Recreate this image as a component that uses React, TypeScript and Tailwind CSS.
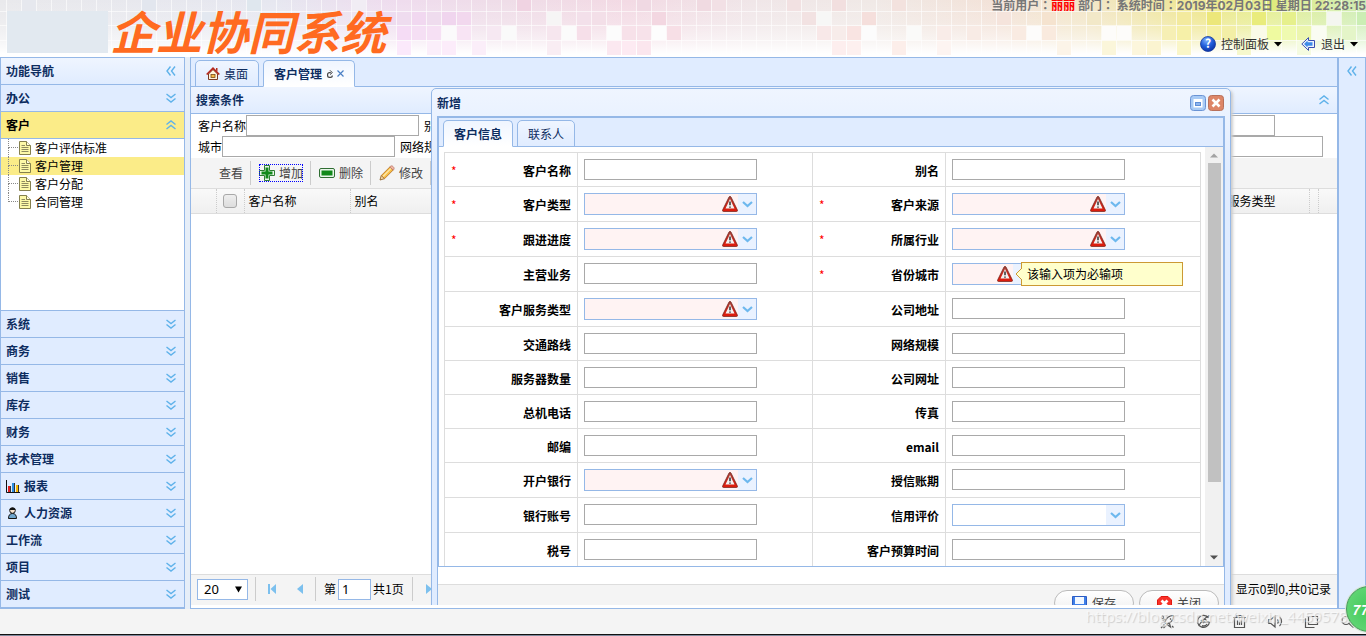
import React from "react";

/* ---------- small drawings ---------- */

function DoubleChevron({ dir }: { dir: "down" | "up" | "left" }) {
  const paths = {
    down: "M0.500 1l4.500 3.500 4.500-3.500M0.500 5.500l4.500 3.500 4.500-3.500",
    up: "M0.500 4.500L5 1l4.500 3.500M0.500 9l4.500-3.500L9.500 9",
    left: "M4.500 0.500L1 5l3.500 4.500M9 0.500L5.500 5 9 9.500",
  };
  return (
    <svg width="10" height="10" viewBox="0 0 10 10" fill="none" stroke="#5fb2ea" strokeWidth="1.400" aria-hidden="true">
      <path d={paths[dir]} />
    </svg>
  );
}

function DocIcon() {
  return (
    <svg width="14" height="14" viewBox="0 0 14 14" aria-hidden="true">
      <path d="M1.500 0.500H8.500L12.500 4.500V13.500H1.500Z" fill="#fdf9a8" stroke="#85804e" />
      <path d="M8.500 0.500V4.500H12.500" fill="#fffde0" stroke="#85804e" />
      <path d="M3.500 4.500H7M3.500 6.500H10.500M3.500 8.500H10.500M3.500 10.500H10.500" stroke="#8f8b5f" />
    </svg>
  );
}

function HomeIcon() {
  return (
    <svg width="14" height="14" viewBox="0 0 14 14" aria-hidden="true">
      <path d="M2.500 7V12.500H11.500V7L7 2.500Z" fill="#fff4dc" stroke="#7a3a22" />
      <path d="M10 1H11.500V4.500L10 3.500Z" fill="#b03020" />
      <path d="M0.700 7.500L7 1.300L13.300 7.500" fill="none" stroke="#b5281c" strokeWidth="1.700" />
      <rect x="5" y="7.500" width="4" height="3" fill="#f5b942" stroke="#7a4a1a" strokeWidth="0.800" />
    </svg>
  );
}

function BarsIcon() {
  return (
    <svg width="14" height="13" viewBox="0 0 14 13" aria-hidden="true">
      <path d="M2 6h3v6H2z" fill="#e02020" />
      <path d="M6 3h3v9H6z" fill="#2a8ee0" />
      <path d="M10 5h3v7h-3z" fill="#f5b800" />
      <path d="M4.500 6v6M8.500 3v9M12.500 5v7" stroke="#333" />
      <path d="M0.500 0V12.500H14" stroke="#111" fill="none" />
    </svg>
  );
}

function PersonIcon() {
  return (
    <svg width="14" height="14" viewBox="0 0 14 14" aria-hidden="true">
      <path d="M2.500 12.500C2.500 9 4 7.500 6.500 7.500S10.500 9 10.500 12.500Z" fill="#6fa5cc" stroke="#111" />
      <circle cx="6.500" cy="4.500" r="2.800" fill="#f7e2cd" stroke="#111" />
      <path d="M3.500 4C3.500 1 9.500 1 9.500 4Z" fill="#111" />
    </svg>
  );
}

function PlusIcon() {
  return (
    <svg width="16" height="16" viewBox="0 0 16 16" aria-hidden="true">
      <path d="M5.500 0.500h5v5h5v5h-5v5h-5v-5h-5v-5h5z" fill="#eaf6ea" stroke="#2f7d32" strokeLinejoin="round" />
      <path d="M6.500 2.500h3v4h4v3h-4v4h-3v-4h-4v-3h4z" fill="#12891a" />
    </svg>
  );
}

function MinusIcon() {
  return (
    <svg width="16" height="16" viewBox="0 0 16 16" aria-hidden="true">
      <rect x="0.500" y="3.500" width="15" height="9" rx="1.500" fill="#eaf6ea" stroke="#2f6d32" />
      <rect x="2.500" y="5.500" width="11" height="5" fill="#12891a" />
    </svg>
  );
}

function PencilIcon() {
  return (
    <svg width="16" height="16" viewBox="0 0 16 16" aria-hidden="true">
      <path d="M1 15L2.200 10.500L5.500 13.700Z" fill="#f3d7a5" stroke="#8a5a1e" strokeWidth="0.800" />
      <path d="M2.500 10.300L11 1.800L14.200 5L5.700 13.500Z" fill="#f8bf48" stroke="#b9772a" strokeWidth="0.900" />
      <path d="M4 11.500L12.300 3.200" stroke="#fdeab0" strokeWidth="1.200" />
      <path d="M10.800 2C12 0.600 13 0.500 14.200 1.700S15.400 4 14.200 5.100Z" fill="#f2b7a4" stroke="#b9776a" strokeWidth="0.800" />
    </svg>
  );
}

function WarnIcon() {
  return (
    <svg width="16" height="16" viewBox="0 0 16 16" aria-hidden="true">
      <defs>
        <linearGradient id="warnRed" x1="0" y1="0" x2="0" y2="1">
          <stop offset="0" stopColor="#a04a40" />
          <stop offset="0.500" stopColor="#c8281c" />
          <stop offset="1" stopColor="#e01a0a" />
        </linearGradient>
      </defs>
      <path d="M7 1Q8 -0.500 9 1L15.400 14Q15.700 15.500 14.600 15.500H1.400Q0.300 15.500 0.600 14Z" fill="url(#warnRed)" stroke="#6e2018" strokeWidth="0.700" strokeLinejoin="round" />
      <path d="M8 3L12.500 12.500H3.500Z" fill="#f4f1f1" />
      <path d="M8 5.500V9.300M8 10.400V11.800" stroke="#222" strokeWidth="1.400" />
    </svg>
  );
}

function HelpIcon() {
  return (
    <svg width="16" height="16" viewBox="0 0 16 16" aria-hidden="true">
      <defs>
        <radialGradient id="helpBlue" cx="0.400" cy="0.250" r="0.800">
          <stop offset="0" stopColor="#7fb2ff" />
          <stop offset="0.500" stopColor="#2360dc" />
          <stop offset="1" stopColor="#0a2fa0" />
        </radialGradient>
      </defs>
      <circle cx="8" cy="8" r="7.500" fill="url(#helpBlue)" stroke="#17399a" strokeWidth="0.800" />
      <text x="8" y="12.300" textAnchor="middle" fontSize="12" fontWeight="700" fill="#fff">?</text>
    </svg>
  );
}

function BackIcon() {
  return (
    <svg width="15" height="14" viewBox="0 0 15 14" aria-hidden="true">
      <path d="M0.800 7L7.500 0.600V3.500H13.500V10.500H7.500V13.400Z" fill="#eef4ff" stroke="#3a4fb0" strokeLinejoin="round" />
      <path d="M3 7L6.500 3.600V5.300H11.500V8.700H6.500V10.400Z" fill="#3f8be8" />
    </svg>
  );
}

function CaretDown() {
  return (
    <svg width="8" height="5" viewBox="0 0 8 5" aria-hidden="true">
      <path d="M0 0H8L4 4.500Z" fill="#000" />
    </svg>
  );
}

function SaveIcon() {
  return (
    <svg width="15" height="15" viewBox="0 0 15 15" aria-hidden="true">
      <path d="M0.500 0.500H14.500V14.500H2L0.500 13Z" fill="#3f7fe8" stroke="#2b5cc4" />
      <rect x="3" y="1" width="9" height="7" fill="#f2f8ff" />
      <rect x="4" y="10" width="7" height="5" fill="#dfe9f7" />
      <rect x="5" y="11" width="2" height="4" fill="#27509e" />
    </svg>
  );
}

function CancelIcon() {
  return (
    <svg width="15" height="15" viewBox="0 0 15 15" aria-hidden="true">
      <path d="M4 0.500H11L14.500 4V11L11 14.500H4L0.500 11V4Z" fill="#f83028" stroke="#e01810" />
      <path d="M4.500 4.500L10.500 10.500M10.500 4.500L4.500 10.500" stroke="#fff" strokeWidth="2.800" />
    </svg>
  );
}

/* Mosaic strip behind the page header: [column, row, colour]. */
const tiles: [number, number, string][] = [
  [1, 0, "#e6e8ee"], [5, 1, "#e9ebf2"], [9, 0, "#e2e6ee"], [13, 1, "#e3e8f0"], [16, 0, "#dfe7ee"], [20, 2, "#f0edf5"],
  [21, 1, "#e4e4ee"], [23, 0, "#f1edf4"], [24, 2, "#f2e6f5"], [25, 1, "#eedcf0"], [26, 1, "#efdcef"], [26, 3, "#fbe9fb"],
  [26, 2, "#f5dcf5"], [27, 1, "#f1d8f0"], [27, 2, "#f5dff4"], [28, 1, "#efdcee"], [28, 2, "#f6e0f4"], [28, 3, "#fbeefa"],
  [29, 1, "#f0d5ee"], [29, 2, "#fbfafb"], [29, 3, "#fcecfa"], [30, 1, "#f2d8ee"], [30, 2, "#f8e4f4"], [31, 3, "#fbeef9"],
  [34, 0, "#f0d3e2"], [36, 1, "#f6f5f5"], [33, 2, "#fafafa"], [32, 2, "#f6e8f2"], [36, 2, "#f6e6ee"], [37, 2, "#fbfbfb"],
  [36, 3, "#f9edf3"], [38, 2, "#f6dfe9"], [38, 1, "#f3e0ea"], [39, 1, "#f3dfe8"], [40, 2, "#fcfcfc"], [40, 3, "#fbe8f0"],
  [41, 2, "#f7e1e9"], [42, 2, "#f7e2ea"], [41, 3, "#fdeaf2"], [42, 3, "#fbe6ee"], [42, 0, "#f0d9e3"], [43, 1, "#f3d7e1"],
  [43, 2, "#fdfdfd"], [44, 2, "#f7dfe6"], [46, 0, "#f0dae1"], [47, 0, "#f2e0e5"], [52, 0, "#f2e1e2"], [53, 1, "#f2e2e2"],
  [54, 1, "#f7f7f6"], [55, 0, "#f2dfdf"], [54, 2, "#f8e8e8"], [55, 2, "#f7ecea"], [56, 2, "#f9e4e2"], [57, 1, "#f5dfdc"],
  [57, 2, "#fcfcfc"], [55, 3, "#fdeeee"], [56, 3, "#fdf0ef"], [59, 3, "#fceeea"], [59, 0, "#f3e2de"], [60, 2, "#fafaf9"],
  [62, 2, "#f9ece8"], [62, 3, "#fdf4f1"], [64, 2, "#f8ebe5"], [66, 0, "#f4e6de"], [66, 1, "#f5e4dc"], [67, 2, "#f9ebe2"],
  [69, 2, "#f9eade"], [68, 2, "#fdfcfb"], [69, 1, "#f5e3cf"], [70, 3, "#fcf4e8"], [73, 2, "#fdfcfa"], [74, 2, "#fdfcfa"],
  [73, 3, "#fbf6da"], [72, 1, "#f2e8c8"], [75, 0, "#f2e9b8"], [75, 3, "#fcf6dc"], [76, 3, "#fbf4d0"], [77, 2, "#f6efb4"],
  [78, 1, "#f3ea9e"], [78, 3, "#faf6c8"], [78, 2, "#f6f0a8"], [79, 0, "#efe89a"], [80, 1, "#ece77a"], [80, 2, "#f5f0a4"],
  [81, 2, "#f3efa6"], [82, 3, "#f6f8cc"], [83, 1, "#e9ec7c"], [84, 0, "#dfea7e"], [83, 2, "#fafae8"], [84, 2, "#effaa0"],
  [85, 1, "#e6f08c"], [85, 2, "#effab0"], [86, 2, "#ecf6ae"], [86, 3, "#f5fbe0"], [87, 0, "#dcec9c"], [88, 1, "#f4f6f0"],
  [87, 2, "#fafcf2"], [89, 2, "#e4f5c8"], [89, 0, "#d3ecb0"], [90, 1, "#cbeeb4"],
];

function Mosaic() {
  const rowTop = [0, 12, 26, 41];
  const rowHeight = [11, 13, 14, 14];
  return (
    <svg className="absolute inset-0 h-full w-full" viewBox="0 0 1366 57" preserveAspectRatio="none" aria-hidden="true">
      <defs>
        <linearGradient id="hue" x1="0" x2="1" y1="0" y2="0">
          <stop offset="0" stopColor="#e9e9ec" />
          <stop offset="0.200" stopColor="#e6e7f0" />
          <stop offset="0.290" stopColor="#efdcee" />
          <stop offset="0.370" stopColor="#efdde8" />
          <stop offset="0.460" stopColor="#f3dae4" />
          <stop offset="0.550" stopColor="#f0e6e8" />
          <stop offset="0.640" stopColor="#f0e9e6" />
          <stop offset="0.730" stopColor="#f3e2d8" />
          <stop offset="0.800" stopColor="#f2e6c6" />
          <stop offset="0.880" stopColor="#eee68c" />
          <stop offset="0.930" stopColor="#e4ee90" />
          <stop offset="1" stopColor="#cdedb6" />
        </linearGradient>
        <linearGradient id="fade" x1="0" x2="0" y1="0" y2="1">
          <stop offset="0" stopColor="#fff" stopOpacity="0" />
          <stop offset="0.400" stopColor="#fff" stopOpacity="0.200" />
          <stop offset="0.700" stopColor="#fff" stopOpacity="0.550" />
          <stop offset="0.950" stopColor="#fff" stopOpacity="1" />
        </linearGradient>
      </defs>
      <rect width="1366" height="57" fill="url(#hue)" />
      <rect width="1366" height="57" fill="url(#fade)" />
      {tiles.map(([c, r, fill], i) => (
        <rect key={i} x={c * 15 + 7} y={rowTop[r]} width="14" height={rowHeight[r]} fill={fill} />
      ))}
      {Array.from({ length: 92 }, (_, i) => (
        <rect key={i} x={i * 15 + 6} y="0" width="1" height="57" fill="#fff" opacity="0.600" />
      ))}
      {[11, 25, 40].map((y) => (
        <rect key={y} x="0" y={y} width="1366" height="1" fill="#fff" opacity="0.600" />
      ))}
    </svg>
  );
}

/* ---------- header ---------- */

function Header() {
  return (
    <header className="relative flex h-[57px] shrink-0 items-start justify-between overflow-hidden bg-white">
      <Mosaic />
      <div className="relative flex items-start pl-[7px]">
        <div className="mt-[11px] h-[42px] w-[101px] bg-[#e2e9f0]" />
        <h1 className="pl-0.5 text-[46px] leading-[60px] font-bold text-[#ff6a20] italic">企业协同系统</h1>
      </div>
      <div className="relative flex flex-col items-end">
        <p className="font-['Inter','Noto_Sans_CJK_TC',sans-serif] text-[12px] leading-3 font-bold whitespace-pre text-[#777]">
          当前用户：<span className="text-[#f00]">丽丽</span> 部门： 系统时间：2019年02月03日 星期日 22:28:15
        </p>
        <nav className="flex items-center gap-[19px] pt-6 pr-2 text-[#333]">
          <button type="button" className="flex h-4 items-center gap-[5px] text-[12px]">
            <HelpIcon />
            控制面板
            <CaretDown />
          </button>
          <button type="button" className="flex h-4 items-center gap-[5px] text-[12px]">
            <BackIcon />
            退出
            <CaretDown />
          </button>
        </nav>
      </div>
    </header>
  );
}

/* ---------- sidebar ---------- */

const treeItems = ["客户评估标准", "客户管理", "客户分配", "合同管理"];
const lowerMenus: { name: string; icon?: React.ReactNode }[] = [
  { name: "系统" },
  { name: "商务" },
  { name: "销售" },
  { name: "库存" },
  { name: "财务" },
  { name: "技术管理" },
  { name: "报表", icon: <BarsIcon /> },
  { name: "人力资源", icon: <PersonIcon /> },
  { name: "工作流" },
  { name: "项目" },
  { name: "测试" },
];

function AccordionHeader({ name, icon, open, top }: { name: string; icon?: React.ReactNode; open?: boolean; top?: boolean }) {
  return (
    <button
      type="button"
      className={
        "flex h-[27px] w-full shrink-0 items-center justify-between border-[#95b8e7] pr-2 pl-[5px] text-[12px] font-bold " +
        (top ? "border-t " : "border-b ") +
        (open ? "bg-[#fbec88] text-black" : "bg-[#e0ecff] text-[#0e2d5f]")
      }
    >
      <span className="flex items-center gap-1">
        {icon}
        {name}
      </span>
      <DoubleChevron dir={open ? "up" : "down"} />
    </button>
  );
}

function Sidebar() {
  return (
    <aside className="flex w-[185px] shrink-0 flex-col border border-b-2 border-[#95b8e7] bg-white">
      <div className="flex h-[27px] shrink-0 items-center justify-between border-b border-[#95b8e7] bg-linear-to-b from-[#eff5ff] to-[#e0ecff] pr-2 pl-[5px] text-[12px] font-bold text-[#0e2d5f]">
        功能导航
        <DoubleChevron dir="left" />
      </div>
      <AccordionHeader name="办公" />
      <AccordionHeader name="客户" open />
      <ul className="min-h-0 flex-1 overflow-hidden">
        {treeItems.map((item, i) => (
          <li key={item} className={"flex h-[18px] items-center pl-[7px] text-[12px] text-black " + (i === 1 ? "bg-[#fbec88]" : "")}>
            <span className="flex h-full w-[10px] flex-col">
              <span className="h-[9px] border-b border-l border-dotted border-[#888]" />
              <span className={"h-[9px] border-dotted border-[#888] " + (i < 3 ? "border-l" : "")} />
            </span>
            <a href="#" className="flex items-center gap-[3px]">
              <DocIcon />
              {item}
            </a>
          </li>
        ))}
      </ul>
      {lowerMenus.map((m) => (
        <AccordionHeader key={m.name} name={m.name} icon={m.icon} top />
      ))}
    </aside>
  );
}

/* ---------- main panel ---------- */

const tabBase = "flex items-center rounded-t-[5px] border border-[#95b8e7] px-[10px] text-[12px] ";
const tabOn = tabBase + "h-[27px] border-b-white bg-linear-to-b from-[#eff5ff] to-white font-bold text-[#0e2d5f]";
const tabOff = tabBase + "h-[27px] bg-linear-to-b from-[#eff5ff] to-[#e0ecff] text-[#0e2d5f]";
const textBox = "h-[21px] w-[173px] border border-[#a9a9a9] bg-white px-1 text-[12px] outline-none";

function TabStrip() {
  return (
    <div className="flex h-[29px] shrink-0 items-start gap-1 bg-[#e0ecff] pt-[2px] pl-1 shadow-[inset_0_-1px_0_#95b8e7]">
      <button type="button" className={tabOff + " gap-1"}>
        <HomeIcon />
        <span>桌面</span>
      </button>
      <button type="button" className={tabOn}>
        客户管理
        <svg className="ml-[5px]" width="6" height="8" viewBox="0 0 6 8" fill="none" stroke="#444" strokeWidth="1.200" aria-hidden="true">
          <path d="M3.800 2.600H2.500A1.900 1.900 0 0 0 0.600 4.500V5.400A1.900 1.900 0 0 0 2.500 7.300H3.400A1.900 1.900 0 0 0 5.300 5.400" />
          <path d="M3 0.300L5.300 2.600L3 4.600" strokeWidth="1" />
        </svg>
        <svg className="ml-1" width="7" height="7" viewBox="0 0 7 7" stroke="#4a7fc4" strokeWidth="1.200" aria-hidden="true">
          <path d="M0.500 0.500L6.500 6.500M6.500 0.500L0.500 6.500" />
        </svg>
      </button>
    </div>
  );
}

function SearchForm() {
  return (
    <form className="h-[44px] shrink-0 overflow-hidden bg-white pt-px text-[12px] text-black">
      <div className="flex items-center pl-[7px]">
        <label htmlFor="q-name">客户名称</label>
        <input id="q-name" className={textBox} />
        <label htmlFor="q-alias" className="ml-[5px]">别名</label>
        <input id="q-alias" className={textBox} />
        <input aria-label="来源" className={textBox + " mr-[62px] ml-auto"} />
      </div>
      <div className="flex items-center pl-[7px]">
        <label htmlFor="q-city">城市</label>
        <input id="q-city" className={textBox} />
        <label htmlFor="q-scale" className="ml-[5px]">网络规模</label>
        <input id="q-scale" className={textBox} />
        <input aria-label="类型" className={textBox + " mr-[14px] ml-auto"} />
      </div>
    </form>
  );
}

function ToolButton({ icon, name, focused }: { icon?: React.ReactNode; name: string; focused?: boolean }) {
  return (
    <div className="flex h-6 w-[60px] items-center justify-end border-r border-[#ccc] pr-[7px]">
      <button
        type="button"
        className={"flex h-[18px] items-center gap-1 text-[12px] whitespace-nowrap text-[#444] " + (focused ? "outline-1 -outline-offset-1 outline-[#00f] outline-dotted" : "")}
      >
        {icon ?? <span className="w-4" />}
        {name}
      </button>
    </div>
  );
}

function GridTable() {
  const th = "border-r border-dotted border-[#ccc] px-1 text-left font-normal whitespace-nowrap";
  return (
    <table className="h-[26px] w-full table-fixed border-collapse border-y border-[#ddd] bg-linear-to-b from-[#f9f9f9] to-[#efefef] text-[12px] text-black">
      <colgroup>
        <col className="w-[25px]" />
        <col className="w-[28px]" />
        <col className="w-[106px]" />
        <col className="w-[106px]" />
        <col />
        <col className="w-[110px]" />
        <col className="w-[9px]" />
        <col className="w-[19px]" />
      </colgroup>
      <thead>
        <tr>
          <th className={th} />
          <th className="border-r border-dotted border-[#ccc]">
            <input type="checkbox" aria-label="全选" className="mx-auto block size-[14px] appearance-none rounded-[3px] border border-[#a8a8a8] bg-linear-to-b from-[#eee] to-[#ddd]" />
          </th>
          <th className={th}>客户名称</th>
          <th className={th}>别名</th>
          <th className={th} />
          <th className={th}>客户服务类型</th>
          <th className="border-r border-dotted border-[#ccc]" />
          <th />
        </tr>
      </thead>
    </table>
  );
}

function PagerArrow({ d, label }: { d: string; label: string }) {
  return (
    <button type="button" aria-label={label} className="flex h-6 w-7 items-center justify-center">
      <svg width="10" height="12" viewBox="0 0 10 12" fill="#7cc0ee" aria-hidden="true">
        <path d={d} />
      </svg>
    </button>
  );
}

function Pager() {
  const sep = "h-6 w-px bg-[#ccc]";
  return (
    <footer className="flex h-[31px] shrink-0 items-center border-t border-[#ddd] bg-[#f4f4f4] px-1.5 pb-0.5 text-[12px] text-black">
      <span className="relative flex items-center">
        <select aria-label="每页条数" className="h-[21px] w-[51px] appearance-none border border-[#95b8e7] bg-white pl-1.5 font-['Noto_Sans'] text-[13px] leading-[18px]">
          <option>20</option>
        </select>
        <svg className="pointer-events-none absolute right-1.5" width="7" height="7" viewBox="0 0 7 7" aria-hidden="true">
          <path d="M0 0.500H7L3.500 6.500Z" fill="#000" />
        </svg>
      </span>
      <span className={sep + " mr-0.5 ml-[7px]"} />
      <PagerArrow label="首页" d="M1 1h2v10H1zM9 1v10L3.500 6z" />
      <PagerArrow label="上一页" d="M8 1v10L2 6z" />
      <span className={sep + " mr-2 ml-px"} />
      <label htmlFor="page">第</label>
      <input id="page" defaultValue="1" className="mx-0.5 h-[21px] w-[33px] border border-[#95b8e7] bg-white px-[3px] font-['Noto_Sans'] text-[13px] leading-[18px] outline-none" />
      共1页
      <span className={sep + " mr-0.5 ml-2"} />
      <PagerArrow label="下一页" d="M2 1v10l6-5z" />
      <span className="ml-auto">显示0到0,共0记录</span>
    </footer>
  );
}

/* ---------- dialog ---------- */

type Field = { label: string; kind?: "text" | "combo" | "warn" | "city"; must?: boolean };

const formRows: [Field, Field][] = [
  [{ label: "客户名称", must: true }, { label: "别名" }],
  [{ label: "客户类型", kind: "warn", must: true }, { label: "客户来源", kind: "warn", must: true }],
  [{ label: "跟进进度", kind: "warn", must: true }, { label: "所属行业", kind: "warn", must: true }],
  [{ label: "主营业务" }, { label: "省份城市", kind: "city", must: true }],
  [{ label: "客户服务类型", kind: "warn" }, { label: "公司地址" }],
  [{ label: "交通路线" }, { label: "网络规模" }],
  [{ label: "服务器数量" }, { label: "公司网址" }],
  [{ label: "总机电话" }, { label: "传真" }],
  [{ label: "邮编" }, { label: "email" }],
  [{ label: "开户银行", kind: "warn" }, { label: "授信账期" }],
  [{ label: "银行账号" }, { label: "信用评价", kind: "combo" }],
  [{ label: "税号" }, { label: "客户预算时间" }],
];

function Combo({ id, warn, narrow }: { id: string; warn?: boolean; narrow?: boolean }) {
  return (
    <span className={"relative flex " + (narrow ? "w-[80px]" : "w-[173px]")}>
      <select id={id} className={"h-[22px] w-full appearance-none border border-[#95b8e7] pl-1 text-[12px] outline-none " + (warn ? "bg-[#fff3f3]" : "bg-white")}>
        <option></option>
      </select>
      <span className="pointer-events-none absolute inset-y-px right-px flex items-center">
        {warn && <WarnIcon />}
        <span className="flex h-full w-[18px] items-center justify-center bg-[#eaf2ff]">
          <svg width="11" height="7" viewBox="0 0 11 7" fill="none" stroke="#6db8ee" strokeWidth="2.200" aria-hidden="true">
            <path d="M1 1l4.500 4L10 1" />
          </svg>
        </span>
      </span>
    </span>
  );
}

function RequiredTip() {
  return (
    <div role="tooltip" className="absolute top-[5px] left-[75px] h-6 w-[162px] border border-[#cc9933] bg-[#ffffcc] px-[5px] text-[12px] leading-[22px] text-black">
      <svg className="absolute top-[5px] -left-[7px]" width="7" height="12" viewBox="0 0 7 12" aria-hidden="true">
        <path d="M7 0L1 6l6 6" fill="#ffffcc" stroke="#cc9933" />
      </svg>
      该输入项为必输项
    </div>
  );
}

function FieldCells({ field, id }: { field: Field; id: string }) {
  const cell = "border border-[#ddd] px-1.5 ";
  return (
    <>
      <th className={cell + "pt-0.5 align-middle font-bold"}>
        <div className="flex items-center justify-between">
          <span className="font-normal text-[#f00]">{field.must ? "*" : ""}</span>
          <label htmlFor={id}>{field.label}</label>
        </div>
      </th>
      <td className={cell + "relative py-1.5 align-top"}>
        {!field.kind && <input id={id} className={textBox + " block"} />}
        {field.kind === "combo" && <Combo id={id} />}
        {field.kind === "warn" && <Combo id={id} warn />}
        {field.kind === "city" && (
          <>
            <Combo id={id} warn narrow />
            <RequiredTip />
          </>
        )}
      </td>
    </>
  );
}

function Dialog() {
  const roundButton = "flex h-[26px] w-20 items-center justify-center gap-[5px] rounded-full border border-[#bbb] bg-linear-to-b from-white to-[#eee] text-[12px] text-[#444]";
  return (
    <section
      role="dialog"
      aria-label="新增"
      className="absolute top-[30px] left-[240px] w-[800px] rounded-[5px] border border-[#95b8e7] bg-linear-to-b from-[#eff5ff] to-[#e0ecff] to-15% px-[5px] pb-[5px] shadow-[2px_2px_3px_#ccc]"
    >
      <div className="flex h-[27px] items-center justify-between pr-px text-[12px] font-bold text-[#0e2d5f]">
        新增
        <span className="flex gap-[2px]">
          <button type="button" aria-label="最大化">
            <svg width="16" height="16" viewBox="0 0 16 16" aria-hidden="true">
              <rect x="0.500" y="0.500" width="15" height="15" rx="3" fill="#a9cbf5" stroke="#6a93d4" />
              <rect x="3.500" y="4" width="9" height="8.500" fill="#fff" />
              <rect x="5.500" y="7.500" width="5" height="3" fill="#8fb6ee" stroke="#5f8fd8" />
            </svg>
          </button>
          <button type="button" aria-label="关闭窗口">
            <svg width="16" height="16" viewBox="0 0 16 16" aria-hidden="true">
              <rect x="0.500" y="0.500" width="15" height="15" rx="3" fill="#dd8668" stroke="#b8705a" />
              <path d="M4.500 4.500l7 7M11.500 4.500l-7 7" stroke="#fff" strokeWidth="2.600" />
            </svg>
          </button>
        </span>
      </div>

      <div className="border border-[#95b8e7] bg-white">
        <div className="border border-[#95b8e7]">
          <div className="flex h-[29px] items-start gap-1 bg-[#e0ecff] pt-[2px] pl-1 shadow-[inset_0_-1px_0_#95b8e7]">
            <button type="button" className={tabOn}>客户信息</button>
            <button type="button" className={tabOff}>联系人</button>
          </div>
          <div className="flex h-[419px]">
            <div className="flex-1 overflow-hidden p-[5px] pr-1">
              <table className="w-full table-fixed border-collapse text-[12px] leading-[18px] text-black">
                <colgroup>
                  <col className="w-[133px]" />
                  <col className="w-[235px]" />
                  <col className="w-[133px]" />
                  <col />
                </colgroup>
                <tbody>
                  {formRows.map(([a, b], i) => (
                    <tr key={i}>
                      <FieldCells field={a} id={"f" + i + "a"} />
                      <FieldCells field={b} id={"f" + i + "b"} />
                    </tr>
                  ))}
                </tbody>
              </table>
            </div>
            <div className="flex w-[18px] flex-col items-center justify-between bg-[#f1f1f1] py-1.5">
              <svg width="8" height="5" viewBox="0 0 8 5" aria-hidden="true">
                <path d="M0 4.500h8L4 0.500z" fill="#a3a3a3" />
              </svg>
              <div className="mt-[5px] mb-auto h-[319px] w-[13px] bg-[#c1c1c1]" />
              <svg width="8" height="5" viewBox="0 0 8 5" aria-hidden="true">
                <path d="M0 0.500h8L4 4.500z" fill="#505050" />
              </svg>
            </div>
          </div>
        </div>
        <div className="mt-[17px] flex justify-end gap-[5px] border-t border-[#ddd] bg-[#f4f4f4] p-[5px]">
          <button type="button" className={roundButton}>
            <SaveIcon />
            保存
          </button>
          <button type="button" className={roundButton}>
            <CancelIcon />
            关闭
          </button>
        </div>
      </div>
    </section>
  );
}

/* ---------- page ---------- */

function Workspace() {
  return (
    <main className="flex min-w-0 flex-1 flex-col border border-[#95b8e7] bg-white pb-[3px]">
      <div className="relative flex min-h-0 flex-1 flex-col overflow-hidden">
        <TabStrip />
        <div className="flex h-[27px] shrink-0 items-center justify-between border-b border-[#95b8e7] bg-linear-to-b from-[#eff5ff] to-[#e0ecff] pr-2 pl-[5px] text-[12px] font-bold text-[#0e2d5f]">
          搜索条件
          <DoubleChevron dir="up" />
        </div>
        <SearchForm />
        <div className="flex h-[30px] shrink-0 items-center bg-[#f4f4f4]">
          <ToolButton name="查看" />
          <ToolButton name="增加" icon={<PlusIcon />} focused />
          <ToolButton name="删除" icon={<MinusIcon />} />
          <ToolButton name="修改" icon={<PencilIcon />} />
        </div>
        <div className="min-h-0 flex-1 overflow-hidden">
          <GridTable />
        </div>
        <Pager />
        <Dialog />
      </div>
    </main>
  );
}

/* Browser status icons: accelerator, page mode, trash, sound, window, zoom. */
const statusIcons = [
  "M5 8.500C6 4 9 1.500 13.500 1.500C13.500 6 11 9 6.500 10ZM5.500 5.500L2 4.500L4.500 8M9.500 9.500L10.500 13L7 10.500M1 14L4.500 10.500M3.500 14L5.500 12M10 4.500L11 5.500M2 1.500L4 3.500M12 12L13.500 13.500",
  "M12.500 4A6 6 0 1 0 13.500 8H6A2.500 2.500 0 0 1 10.500 6.500M2.500 12C5 8 9 3.500 13.500 1.500M5 6L8 9M6 11.500A4 4 0 0 0 11 10",
  "M1 3.500H14M5 3.500V1.500H10V3.500M2.500 3.500V13.500H12.500V3.500M5.500 6.500V11M7.500 6.500V11M9.500 6.500V11",
  "M0.800 5.500V9.500H3L7 13V2L3 5.500ZM9.500 5.500A3 3 0 0 1 9.500 9.500M11.500 3A6 6 0 0 1 11.500 12",
  "M4.500 2.500H13.500V10.500H4.500ZM1.500 4.500V13.500H10.500",
  "M10 6.500A4 4 0 1 1 2 6.500A4 4 0 1 1 10 6.500M9 9.500L13.500 13.500",
];

function StatusBar() {
  return (
    <div className="relative flex h-[25px] shrink-0 items-center justify-end gap-[21px] bg-[#f4f4f4] pr-[11px]">
      {statusIcons.map((d, i) => (
        <svg key={i} width="15" height="15" viewBox="0 0 15 15" fill="none" stroke="#555" strokeWidth="1.200" aria-hidden="true">
          <path d={d} />
        </svg>
      ))}
      <p className="absolute right-2.5 bottom-2 font-['Open_Sans',sans-serif] text-[15px] leading-5 text-white/60 [text-shadow:1px_1px_1px_#ccc]">
        https://blog.csdn.net/weixin_44595789
      </p>
    </div>
  );
}

export default function App() {
  return (
    <div className="relative flex h-screen flex-col overflow-hidden bg-[#e6eef8] font-['Noto_Sans_CJK_SC',sans-serif]">
      <Header />
      <div className="flex min-h-0 flex-1">
        <Sidebar />
        <div className="w-[5px] shrink-0" />
        <Workspace />
        <aside className="flex w-7 shrink-0 justify-center border border-[#95b8e7] bg-[#e0ecff] pt-2">
          <button type="button" aria-label="展开" className="size-[10px]">
            <DoubleChevron dir="left" />
          </button>
        </aside>
      </div>
      <StatusBar />
      <div className="h-[2px] shrink-0 border-t border-[#111] bg-[#7f899c]" />
      <div className="absolute -right-[26px] bottom-[4px] flex size-[46px] items-center rounded-full border border-[#4a9a58] bg-radial from-[#3fc95a] to-[#6ad97c] pl-1 text-[14px] font-bold text-white italic shadow-[0_0_0_1px_#d8e6d8]">
        77
      </div>
    </div>
  );
}
